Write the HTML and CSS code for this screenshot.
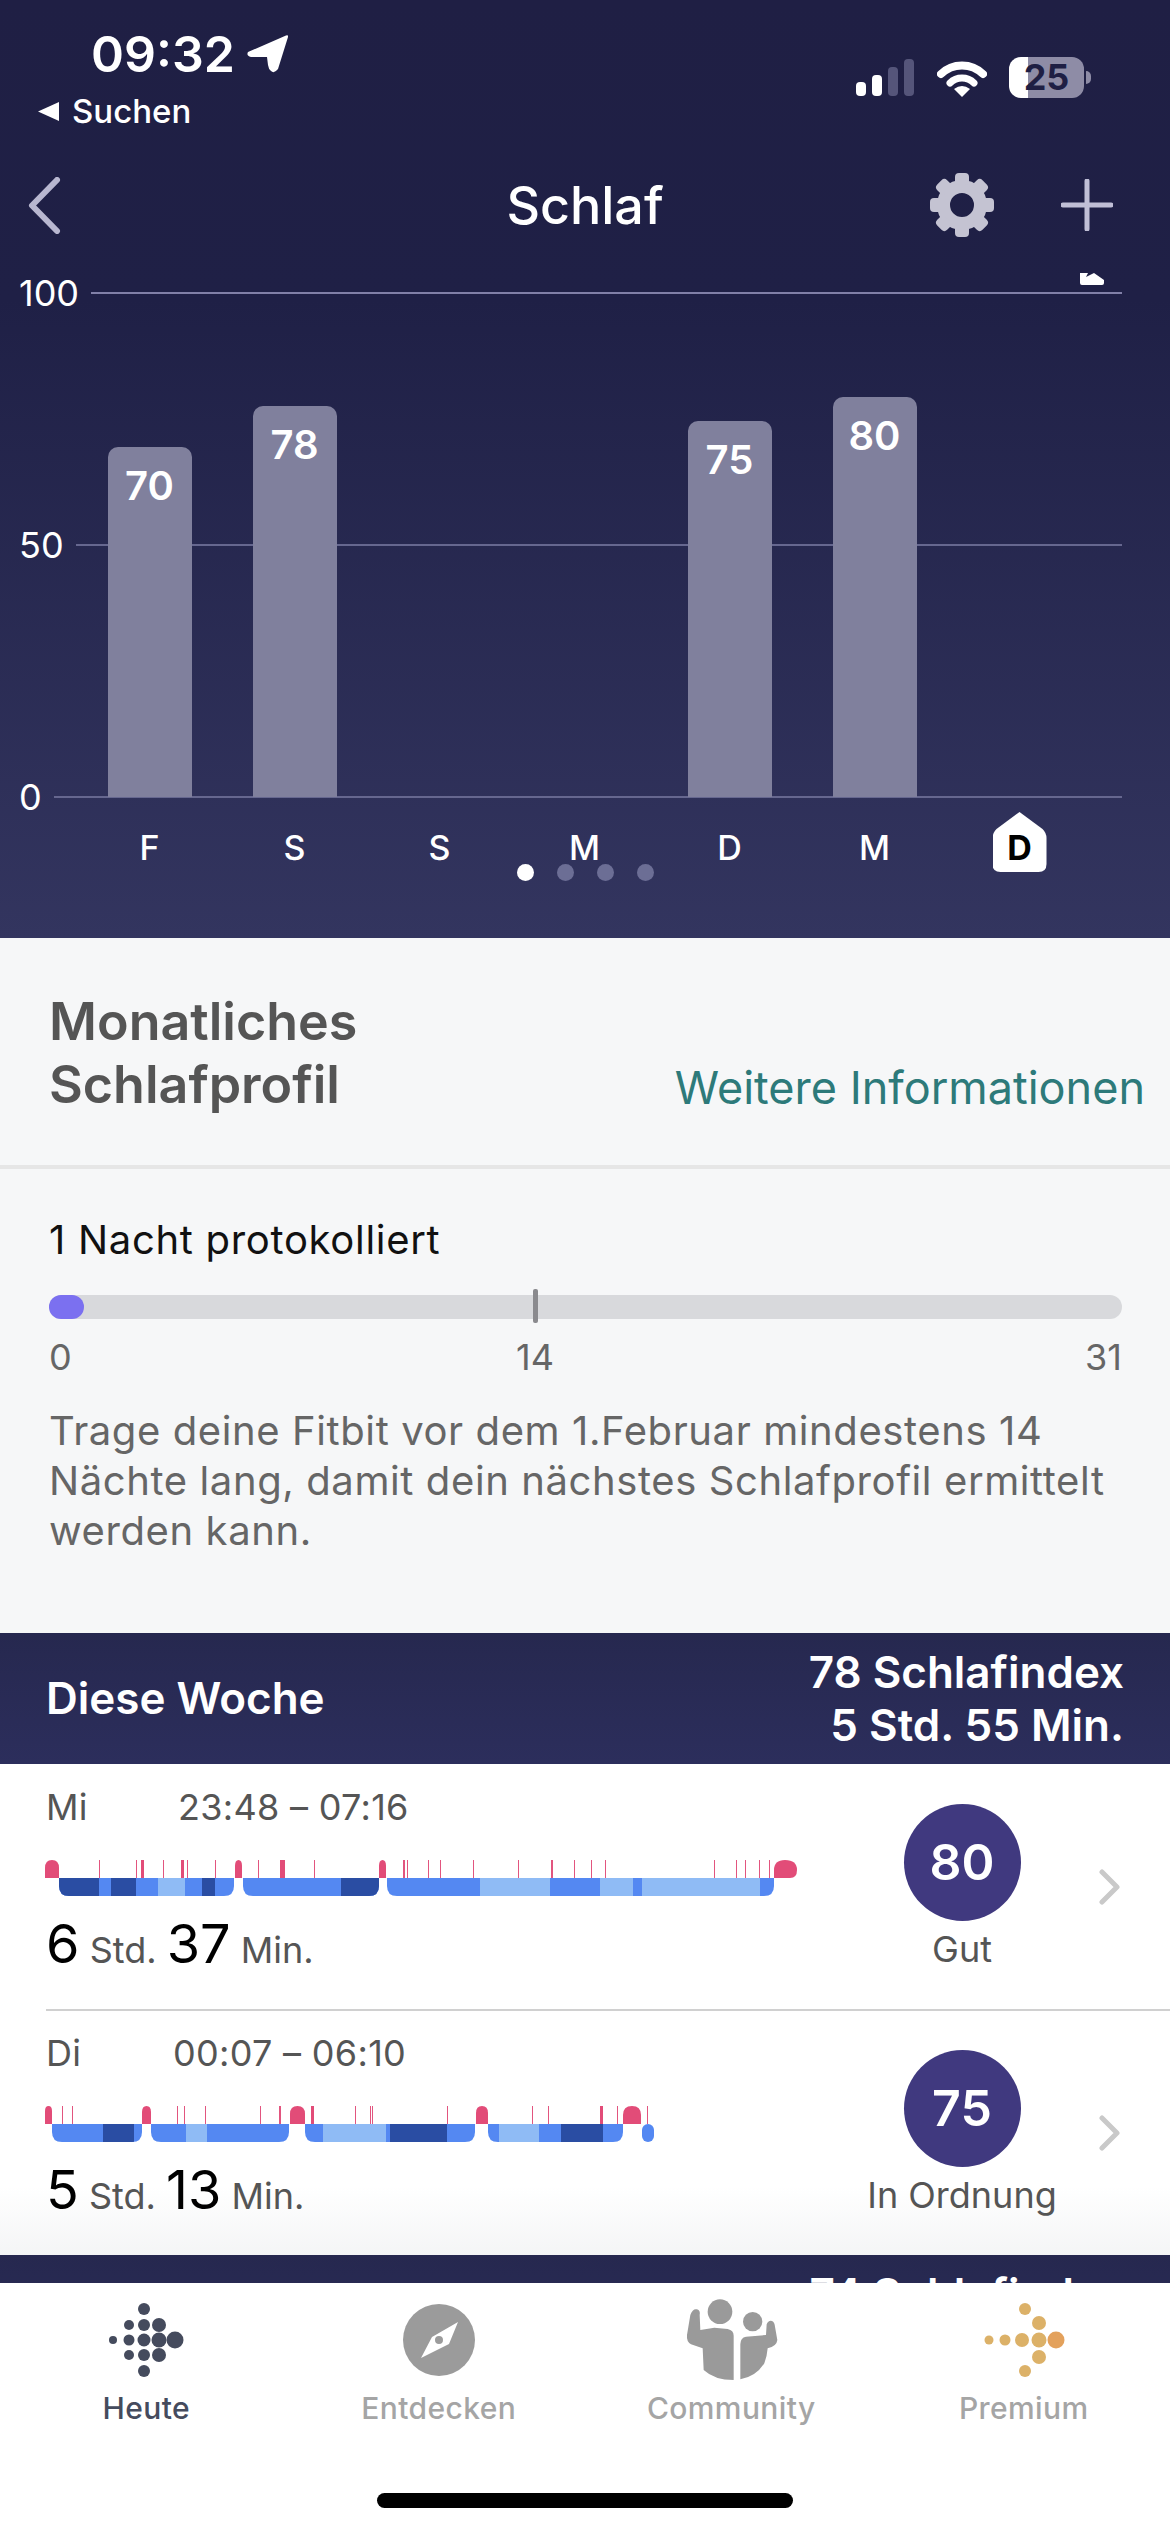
FILE: index.html
```html
<!DOCTYPE html>
<html lang="de">
<head>
    <meta charset="utf-8">
    <meta name="viewport" content="width=device-width, initial-scale=1">
    <title>Schlaf</title>
    <link rel="stylesheet" href="styles.css">
</head>
<body>
<div class="app">
    <div class="content">
        <section class="hero">
            <div class="status">
                <div class="status-left">
                    <div class="clock">
                        <span>09:32</span>
                        <svg class="loc-arrow" viewBox="0 0 41 38"><path d="M39 0.5Q41.5 -0.5 41 2L31 34Q27 39 24 36Q21.5 34 21 30L20 22H4Q-1 21 1 17Z" fill="#fff"/></svg>
                    </div>
                    <div class="back-app">
                        <svg class="back-tri" viewBox="0 0 21 19"><path d="M21 0V19L0 9.5Z" fill="#fff"/></svg>
                        <span>Suchen</span>
                    </div>
                </div>
                <div class="status-right">
                    <svg class="signal" viewBox="0 0 58 37">
                        <rect x="0" y="23" width="10" height="14" rx="4" fill="#fff"/>
                        <rect x="16" y="16" width="10" height="21" rx="4" fill="#fff"/>
                        <rect x="32" y="8" width="10" height="29" rx="4" fill="#55557a"/>
                        <rect x="48" y="0" width="10" height="37" rx="4" fill="#55557a"/>
                    </svg>
                    <svg class="wifi" viewBox="0 0 50 38">
                        <path d="M4 15A30 30 0 0 1 46 15" fill="none" stroke="#fff" stroke-width="8" stroke-linecap="round"/>
                        <path d="M13 24A17 17 0 0 1 37 24" fill="none" stroke="#fff" stroke-width="7" stroke-linecap="round"/>
                        <path d="M25 38L17 30Q25 24 33 30Z" fill="#fff"/>
                    </svg>
                    <div class="battery">
                        <div class="battery-body"><span>25</span></div>
                        <div class="battery-nub"></div>
                    </div>
                </div>
            </div>

            <div class="topbar">
                <svg class="nav-back" viewBox="0 0 33 57"><path d="M29 3L4 28.500L29 54" fill="none" stroke="#b8b7d0" stroke-width="6" stroke-linecap="round" stroke-linejoin="round"/></svg>
                <h1>Schlaf</h1>
                <div class="topbar-actions">
                    <svg class="gear" viewBox="-32 -32 64 64">
                        <circle r="18.500" fill="none" stroke="#c4c3d2" stroke-width="13"/>
                        <g fill="#c4c3d2">
                            <rect x="-7" y="-32" width="14" height="12" rx="4"/>
                            <rect x="-7" y="-32" width="14" height="12" rx="4" transform="rotate(45)"/>
                            <rect x="-7" y="-32" width="14" height="12" rx="4" transform="rotate(90)"/>
                            <rect x="-7" y="-32" width="14" height="12" rx="4" transform="rotate(135)"/>
                            <rect x="-7" y="-32" width="14" height="12" rx="4" transform="rotate(180)"/>
                            <rect x="-7" y="-32" width="14" height="12" rx="4" transform="rotate(225)"/>
                            <rect x="-7" y="-32" width="14" height="12" rx="4" transform="rotate(270)"/>
                            <rect x="-7" y="-32" width="14" height="12" rx="4" transform="rotate(315)"/>
                        </g>
                    </svg>
                    <svg class="plus" viewBox="0 0 52 52"><path d="M26 2V50M2 26H50" fill="none" stroke="#c0bfd6" stroke-width="5" stroke-linecap="round"/></svg>
                </div>
            </div>

            <div class="plot">
                <svg class="peek-badge" viewBox="0 0 24 12"><path d="M0 0H8L6 4L14 0L24 7V10Q24 12 22 12H2Q0 12 0 10Z" fill="#fff"/></svg>
                <div class="grid-row grid-top"><span>100</span><i></i></div>
                <div class="grid-row grid-mid"><span>50</span><i></i></div>
                <div class="grid-row grid-bottom"><span>0</span><i></i></div>
                <div class="bars">
                    <div class="bar" style="height: 69.4%">70</div>
                    <div class="bar" style="height: 77.6%">78</div>
                    <div></div>
                    <div></div>
                    <div class="bar" style="height: 74.6%">75</div>
                    <div class="bar" style="height: 79.4%">80</div>
                    <div></div>
                </div>
            </div>

            <div class="days">
                <span>F</span><span>S</span><span>S</span><span>M</span><span>D</span><span>M</span><span class="today">D</span>
            </div>
            <div class="pager">
                <i class="active"></i><i></i><i></i><i></i>
            </div>
        </section>

        <section class="profile">
            <h2>Monatliches<br>Schlafprofil</h2>
            <a class="more" href="#">Weitere Informationen</a>
        </section>

        <section class="progress">
            <div class="progress-title">1 Nacht protokolliert</div>
            <div class="track">
                <div class="track-fill"></div>
                <div class="track-tick"></div>
            </div>
            <div class="scale">
                <span>0</span>
                <span class="scale-mid">14</span>
                <span class="scale-end">31</span>
            </div>
            <p>Trage deine Fitbit vor dem 1.Februar mindestens 14 Nächte lang, damit dein nächstes Schlafprofil ermittelt werden kann.</p>
        </section>

        <section class="week-head">
            <div class="week-name">Diese Woche</div>
            <div class="week-sum">78 Schlafindex<br>5 Std. 55 Min.</div>
        </section>

        <div class="night night-first">
            <div class="night-main">
                <div class="night-time"><span class="night-day">Mi</span><span class="night-range">23:48 – 07:16</span></div>
                <svg class="sleep" viewBox="45 0 760 36">
                    <defs>
                        <clipPath id="a1"><path d="M59 18H234V26Q234 36 224 36H69Q59 36 59 26Z"/></clipPath>
                        <clipPath id="a2"><path d="M243 18H379V26Q379 36 369 36H253Q243 36 243 26Z"/></clipPath>
                        <clipPath id="a3"><path d="M387 18H774V26Q774 36 764 36H397Q387 36 387 26Z"/></clipPath>
                    </defs>
                    <g class="wake">
                        <path d="M45 18V8Q45 0 52 0Q59 0 59 8V18Z"/>
                        <path d="M235 18V6Q235 0 238.500 0Q242 0 242 6V18Z"/>
                        <path d="M379 18V6Q379 0 382.500 0Q386 0 386 6V18Z"/>
                        <path d="M774 18V10Q774 0 785 0Q797 0 797 10Q797 18 790 18Z"/>
                        <rect x="141" y="0" width="3" height="18"/>
                        <rect x="181" y="0" width="3" height="18"/>
                        <rect x="280" y="0" width="5" height="18"/>
                    </g>
                    <g class="wake-thin">
                        <rect x="99" y="0" width="1" height="18"/><rect x="136" y="0" width="1" height="18"/><rect x="163" y="0" width="1" height="18"/><rect x="187" y="0" width="1" height="18"/><rect x="215" y="0" width="1" height="18"/><rect x="258" y="0" width="1" height="18"/><rect x="314" y="0" width="1" height="18"/><rect x="403" y="0" width="2" height="18"/><rect x="407" y="0" width="1" height="18"/><rect x="428" y="0" width="1" height="18"/><rect x="440" y="0" width="1" height="18"/><rect x="473" y="0" width="1" height="18"/><rect x="518" y="0" width="1" height="18"/><rect x="551" y="0" width="2" height="18"/><rect x="574" y="0" width="1" height="18"/><rect x="591" y="0" width="1" height="18"/><rect x="605" y="0" width="1" height="18"/><rect x="714" y="0" width="1" height="18"/><rect x="736" y="0" width="1" height="18"/><rect x="745" y="0" width="1" height="18"/><rect x="759" y="0" width="1" height="18"/><rect x="769" y="0" width="1" height="18"/>
                    </g>
                    <g clip-path="url(#a1)">
                        <rect class="mid" x="59" y="18" width="175" height="18"/>
                        <rect class="deep" x="59" y="18" width="40" height="18"/>
                        <rect class="deep" x="111" y="18" width="25" height="18"/>
                        <rect class="light" x="158" y="18" width="27" height="18"/>
                        <rect class="deep" x="202" y="18" width="13" height="18"/>
                    </g>
                    <g clip-path="url(#a2)">
                        <rect class="mid" x="243" y="18" width="136" height="18"/>
                        <rect class="deep" x="341" y="18" width="38" height="18"/>
                    </g>
                    <g clip-path="url(#a3)">
                        <rect class="mid" x="387" y="18" width="387" height="18"/>
                        <rect class="light" x="480" y="18" width="70" height="18"/>
                        <rect class="light" x="600" y="18" width="33" height="18"/>
                        <rect class="light" x="642" y="18" width="118" height="18"/>
                    </g>
                </svg>
                <div class="duration"><b>6</b> Std. <b>37</b> Min.</div>
            </div>
            <div class="score">
                <div class="score-circle">80</div>
                <div class="score-label">Gut</div>
            </div>
            <svg class="row-chevron" viewBox="0 0 21 36"><path d="M3 3L18 18L3 33" fill="none" stroke="#c9c9c9" stroke-width="5" stroke-linecap="round" stroke-linejoin="round"/></svg>
        </div>

        <div class="night night-last">
            <div class="night-main">
                <div class="night-time"><span class="night-day">Di</span><span class="night-range night-range-b">00:07 – 06:10</span></div>
                <svg class="sleep" viewBox="45 0 760 36">
                    <defs>
                        <clipPath id="b1"><path d="M52 18H142V26Q142 36 132 36H62Q52 36 52 26Z"/></clipPath>
                        <clipPath id="b2"><path d="M151 18H289V26Q289 36 279 36H161Q151 36 151 26Z"/></clipPath>
                        <clipPath id="b3"><path d="M305 18H475V26Q475 36 465 36H315Q305 36 305 26Z"/></clipPath>
                        <clipPath id="b4"><path d="M488 18H623V26Q623 36 613 36H498Q488 36 488 26Z"/></clipPath>
                    </defs>
                    <g class="wake">
                        <path d="M45 18V5Q45 0 48.500 0Q52 0 52 5V18Z"/>
                        <path d="M142 18V6Q142 0 146.500 0Q151 0 151 6V18Z"/>
                        <path d="M290 18V8Q290 0 297.500 0Q305 0 305 8V18Z"/>
                        <path d="M476 18V7Q476 0 482 0Q488 0 488 7V18Z"/>
                        <path d="M623 18V9Q623 0 632 0Q641 0 641 9V18Z"/>
                        <rect x="311" y="0" width="3" height="18"/>
                        <rect x="600" y="0" width="3" height="18"/>
                    </g>
                    <g class="wake-thin">
                        <rect x="62" y="0" width="1" height="18"/><rect x="72" y="0" width="1" height="18"/><rect x="177" y="0" width="1" height="18"/><rect x="184" y="0" width="1" height="18"/><rect x="205" y="0" width="1" height="18"/><rect x="260" y="0" width="1" height="18"/><rect x="279" y="0" width="2" height="18"/><rect x="355" y="0" width="1" height="18"/><rect x="370" y="0" width="1" height="18"/><rect x="372" y="0" width="1" height="18"/><rect x="447" y="0" width="1" height="18"/><rect x="532" y="0" width="1" height="18"/><rect x="548" y="0" width="1" height="18"/><rect x="617" y="0" width="1" height="18"/><rect x="647" y="0" width="1" height="18"/>
                    </g>
                    <g clip-path="url(#b1)">
                        <rect class="mid" x="52" y="18" width="90" height="18"/>
                        <rect class="deep" x="103" y="18" width="31" height="18"/>
                    </g>
                    <g clip-path="url(#b2)">
                        <rect class="mid" x="151" y="18" width="138" height="18"/>
                        <rect class="light" x="186" y="18" width="21" height="18"/>
                    </g>
                    <g clip-path="url(#b3)">
                        <rect class="mid" x="305" y="18" width="170" height="18"/>
                        <rect class="light" x="323" y="18" width="63" height="18"/>
                        <rect class="deep" x="390" y="18" width="57" height="18"/>
                    </g>
                    <g clip-path="url(#b4)">
                        <rect class="mid" x="488" y="18" width="135" height="18"/>
                        <rect class="light" x="499" y="18" width="40" height="18"/>
                        <rect class="deep" x="561" y="18" width="42" height="18"/>
                    </g>
                    <rect class="mid" x="642" y="18" width="12" height="18" rx="6"/>
                </svg>
                <div class="duration"><b>5</b> Std. <b>13</b> Min.</div>
            </div>
            <div class="score">
                <div class="score-circle">75</div>
                <div class="score-label">In Ordnung</div>
            </div>
            <svg class="row-chevron" viewBox="0 0 21 36"><path d="M3 3L18 18L3 33" fill="none" stroke="#c9c9c9" stroke-width="5" stroke-linecap="round" stroke-linejoin="round"/></svg>
        </div>

        <section class="week-head">
            <div class="week-name"></div>
            <div class="week-sum">74 Schlafindex</div>
        </section>
    </div>

    <nav class="tabs">
        <a class="tab tab-active" href="#">
            <svg viewBox="-70 -55 140 110" fill="#454b5d">
                <circle cx="-2" cy="-31" r="6"/>
                <circle cx="-17" cy="-15" r="5"/><circle cx="-2" cy="-15" r="6"/><circle cx="13" cy="-15" r="7"/>
                <circle cx="-33" cy="0" r="4"/><circle cx="-17" cy="0" r="5.500"/><circle cx="-2" cy="0" r="6.500"/><circle cx="13" cy="0" r="7.500"/><circle cx="29" cy="0" r="8.500"/>
                <circle cx="-17" cy="15" r="5"/><circle cx="-2" cy="15" r="6"/><circle cx="13" cy="15" r="7"/>
                <circle cx="-2" cy="31" r="6"/>
            </svg>
            <span>Heute</span>
        </a>
        <a class="tab" href="#">
            <svg viewBox="-70 -55 140 110">
                <circle r="36" fill="#9b9b9b"/>
                <path fill-rule="evenodd" d="M19 -18L10 4L-18 18L-7 -3ZM0 -4A4 4 0 1 0 0 4A4 4 0 1 0 0 -4Z" fill="#fff"/>
            </svg>
            <span>Entdecken</span>
        </a>
        <a class="tab" href="#">
            <svg viewBox="0 0 420 330" fill="#9a9a9a">
                <circle cx="177" cy="80" r="37"/>
                <circle cx="275" cy="110" r="29"/>
                <path d="M88 90Q95 70 108 73Q119 77 116 90L118 135L160 128L200 132Q218 136 218 152V285Q160 285 128 255L125 190L90 178Q76 170 78 150Z"/>
                <path d="M238 283V178Q238 158 255 155L315 150L317 118Q322 105 333 108Q341 112 342 125L349 165Q347 184 320 190Q318 215 310 235Q285 275 238 283Z"/>
            </svg>
            <span>Community</span>
        </a>
        <a class="tab" href="#">
            <svg viewBox="-70 -55 140 110" fill="#dcb168">
                <circle cx="1" cy="-31" r="6"/>
                <circle cx="15" cy="-17" r="7"/>
                <circle cx="-35" cy="0" r="4.500"/><circle cx="-19" cy="0" r="5.500"/><circle cx="-2" cy="0" r="7"/><circle cx="15" cy="0" r="7.500"/>
                <circle cx="32" cy="0" r="8.500" fill="#e3a15c"/>
                <circle cx="15" cy="17" r="7"/>
                <circle cx="1" cy="31" r="6"/>
            </svg>
            <span>Premium</span>
        </a>
    </nav>
    <div class="home-zone"><div class="home-bar"></div></div>
</div>
</body>
</html>
```

FILE: styles.css
```css
* {
    box-sizing: border-box;
}
html, body {
    margin: 0;
    padding: 0;
}
body {
    font-family: Inter, "Noto Sans", sans-serif;
    background: #fff;
    color: #555;
}
h1, h2, p {
    margin: 0;
    font-weight: normal;
}
a {
    text-decoration: none;
    color: inherit;
}
svg {
    display: block;
}
.app {
    width: 1170px;
    height: 2532px;
    display: flex;
    flex-direction: column;
    overflow: hidden;
}
.content {
    height: 2283px;
    overflow: hidden;
    flex-shrink: 0;
}

/* top dark part */
.hero {
    height: 938px;
    color: #fff;
    background: linear-gradient(#1f1f44 0, #1f2046 300px, #33355f 100%);
}
.status {
    height: 160px;
    padding-top: 29px;
    display: flex;
    justify-content: space-between;
}
.status-left {
    padding-left: 38px;
}
.clock {
    display: flex;
    align-items: flex-start;
    padding-left: 53px;
    font-size: 50px;
    font-weight: 600;
    line-height: 50px;
}
.loc-arrow {
    width: 41px;
    height: 38px;
    margin: 6px 0 0 12px;
}
.back-app {
    display: flex;
    align-items: center;
    margin-top: 15px;
    font-size: 33px;
    font-weight: 500;
    line-height: 34px;
}
.back-tri {
    width: 21px;
    height: 19px;
    margin-right: 13px;
}
.status-right {
    display: flex;
    align-items: flex-start;
    padding: 28px 79px 0 0;
}
.signal {
    width: 58px;
    height: 37px;
    margin-top: 2px;
}
.wifi {
    width: 50px;
    height: 38px;
    margin: 2px 22px 0 23px;
}
.battery {
    display: flex;
    align-items: center;
}
.battery-body {
    width: 75px;
    height: 41px;
    border-radius: 12px;
    background: linear-gradient(90deg, #fff 19px, #8e8ca6 19px);
    color: #1f1f44;
    font-size: 36px;
    font-weight: 700;
    line-height: 41px;
    text-align: center;
}
.battery-nub {
    width: 5px;
    height: 13px;
    margin-left: 2px;
    border-radius: 0 6px 6px 0;
    background: #8e8ca6;
}
.topbar {
    height: 90px;
    display: grid;
    grid-template-columns: 1fr auto 1fr;
    align-items: center;
}
.nav-back {
    width: 33px;
    height: 57px;
    margin-left: 28px;
}
.topbar h1 {
    font-size: 52px;
    font-weight: 500;
}
.topbar-actions {
    display: flex;
    align-items: center;
    justify-content: flex-end;
    gap: 67px;
    padding-right: 57px;
}
.gear {
    width: 64px;
    height: 64px;
}
.plus {
    width: 52px;
    height: 52px;
}

/* bar chart */
.plot {
    position: relative;
    height: 504px;
    margin-top: 43px;
}
.peek-badge {
    position: absolute;
    left: 1080px;
    top: -20px;
    width: 24px;
    height: 12px;
}
.grid-row {
    position: absolute;
    left: 19px;
    right: 48px;
    display: flex;
    align-items: center;
    gap: 12px;
    font-size: 36px;
    line-height: 44px;
    transform: translateY(-50%);
}
.grid-row i {
    flex: 1;
    height: 2px;
    background: #66678f;
}
.grid-top i {
    background: #8180a8;
}
.grid-top {
    top: 0;
}
.grid-mid {
    top: 50%;
}
.grid-bottom {
    top: 100%;
}
.bars {
    position: relative;
    height: 100%;
    margin-left: 77px;
    display: grid;
    grid-template-columns: repeat(7, 145px);
    align-items: end;
    justify-items: center;
}
.bar {
    width: 84px;
    padding-top: 16px;
    border-radius: 10px 10px 0 0;
    background: #80809d;
    font-size: 40px;
    font-weight: 600;
    line-height: 46px;
    text-align: center;
}
.days {
    height: 52px;
    margin: 15px 0 0 77px;
    display: grid;
    grid-template-columns: repeat(7, 145px);
    justify-items: center;
    font-size: 34px;
    font-weight: 500;
    line-height: 72px;
}
.today {
    width: 54px;
    height: 60px;
    background: #fff;
    color: #000;
    font-weight: 700;
    text-align: center;
    clip-path: path('M27 0L50 17Q54 21 54 26V52Q54 60 46 60H8Q0 60 0 52V26Q0 21 4 17Z');
}
.pager {
    display: flex;
    justify-content: center;
    gap: 23px;
}
.pager i {
    width: 17px;
    height: 17px;
    border-radius: 50%;
    background: #6c6e95;
}
.pager .active {
    background: #fff;
}

/* monthly profile */
.profile {
    height: 231px;
    padding: 52px 25px 0 49px;
    display: flex;
    justify-content: space-between;
    align-items: flex-start;
    background: #f6f7f8;
    border-bottom: 4px solid #e6e6e6;
}
.profile h2 {
    font-size: 52px;
    font-weight: 600;
    line-height: 63px;
    color: #555;
}
.more {
    margin-top: 66px;
    font-size: 45px;
    line-height: 63px;
    color: #2d7a7a;
}
.progress {
    height: 464px;
    padding: 46px 48px 0 49px;
    background: #f6f7f8;
}
.progress-title {
    font-size: 40px;
    letter-spacing: 0.7px;
    line-height: 50px;
    color: #111;
}
.track {
    position: relative;
    height: 24px;
    margin-top: 30px;
    border-radius: 12px;
    background: #d8d9dc;
}
.track-fill {
    width: 35px;
    height: 24px;
    border-radius: 12px;
    background: #7b70f0;
}
.track-tick {
    position: absolute;
    left: 45.3%;
    top: -6px;
    width: 5px;
    height: 34px;
    margin-left: -2px;
    border-radius: 2px;
    background: #8a8a8e;
}
.scale {
    margin-top: 16px;
    display: grid;
    grid-template-columns: 45.3% 0 1fr;
    font-size: 36px;
    line-height: 44px;
    color: #666;
}
.scale-mid {
    justify-self: center;
}
.scale-end {
    text-align: right;
}
.progress p {
    margin-top: 27px;
    font-size: 40px;
    letter-spacing: 0.6px;
    line-height: 50px;
    color: #666;
}

/* week list */
.week-head {
    height: 131px;
    padding: 13px 46px 0 46px;
    display: flex;
    justify-content: space-between;
    color: #fff;
    background: linear-gradient(#26284f, #2c2e5c);
    font-size: 44px;
    font-weight: 600;
}
.week-name {
    line-height: 105px;
}
.week-sum {
    line-height: 53px;
    text-align: right;
}
.night {
    display: flex;
    align-items: flex-start;
    height: 247px;
    padding: 19px 50px 0 45px;
    background: #fff;
}
.night-first {
    background: linear-gradient(#d0d0d0, #d0d0d0) 46px bottom / 100% 2px no-repeat #fff;
}
.night-last {
    height: 244px;
    padding-top: 18px;
    background: linear-gradient(#fff 72%, #f4f5f6 100%);
}
.night-main {
    flex: 1;
}
.night-time {
    display: flex;
    font-size: 36px;
    letter-spacing: 0.3px;
    line-height: 48px;
    color: #555;
}
.night-day {
    width: 133px;
    padding-left: 1px;
}
.night-range-b {
    margin-left: -5px;
}
.sleep {
    width: 760px;
    height: 36px;
    margin-top: 29px;
}
.wake {
    fill: #e24c78;
}
.wake-thin {
    fill: #e2557f;
}
.deep {
    fill: #2a4da3;
}
.mid {
    fill: #5488f2;
}
.light {
    fill: #8fbbf5;
}
.duration {
    margin-top: 18px;
    padding-left: 1px;
    font-size: 36px;
    line-height: 60px;
    color: #555;
}
.duration b {
    font-size: 54px;
    font-weight: 400;
    color: #000;
}
.score {
    width: 200px;
    padding-top: 21px;
    display: flex;
    flex-direction: column;
    align-items: center;
}
.score-circle {
    width: 117px;
    height: 117px;
    border-radius: 50%;
    background: #40397f;
    color: #fff;
    font-size: 50px;
    font-weight: 600;
    line-height: 117px;
    text-align: center;
}
.score-label {
    margin-top: 6px;
    font-size: 36px;
    line-height: 44px;
    white-space: nowrap;
    color: #555;
}
.row-chevron {
    width: 21px;
    height: 36px;
    margin: 86px 0 0 37px;
}

/* bottom tabs */
.tabs {
    display: grid;
    grid-template-columns: repeat(4, 1fr);
    padding-top: 2px;
    background: #fff;
}
.tab {
    display: flex;
    flex-direction: column;
    align-items: center;
    font-size: 30px;
    font-weight: 500;
    letter-spacing: 0.4px;
    line-height: 36px;
    color: #a5a5a5;
}
.tab svg {
    width: 140px;
    height: 110px;
}
.tab span {
    margin-top: -5px;
}
.tab-active {
    color: #454b5d;
}
.home-zone {
    padding-top: 67px;
}
.home-bar {
    width: 416px;
    height: 15px;
    margin: 0 auto;
    border-radius: 8px;
    background: #000;
}
```
